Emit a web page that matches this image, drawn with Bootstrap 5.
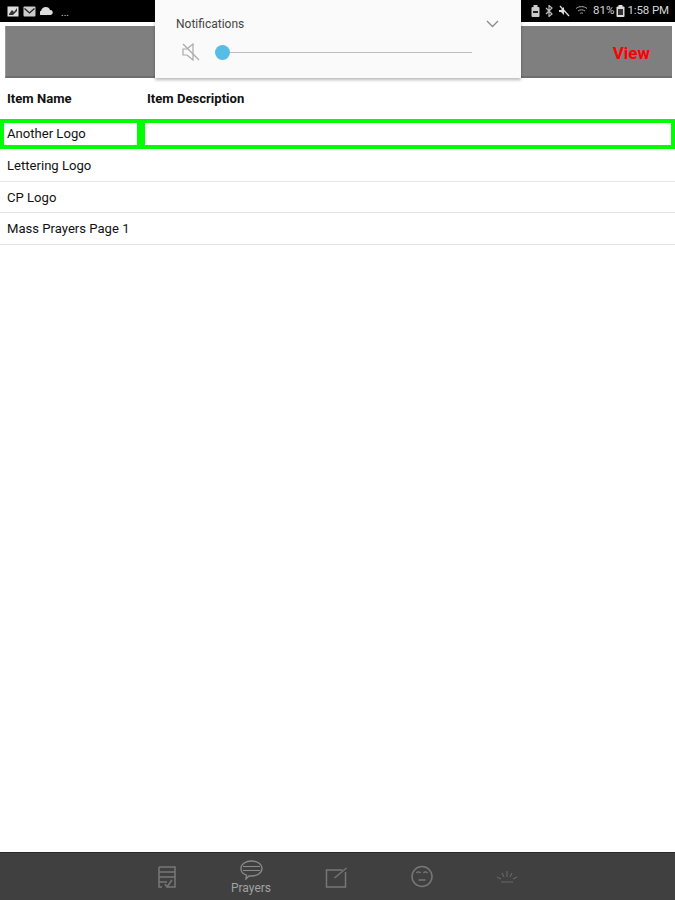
<!DOCTYPE html>
<html lang="en">
<head>
<meta charset="utf-8">
<title>Items</title>
<link href="https://cdn.jsdelivr.net/npm/bootstrap@5.3.0/dist/css/bootstrap.min.css" rel="stylesheet">
<style>
html,body{height:100%;}
body{font-family:"Roboto","Liberation Sans",sans-serif;background:#fff;color:#111;width:675px;height:900px;overflow:hidden;}
.phone-shell{height:900px;}
.status-strip{height:22px;background:#000;color:#d8d8d8;font-size:11.5px;padding:0 6px 0 7px;flex:none;}
.status-strip svg{display:block;}
.status-icons{gap:5px;}
.status-read{gap:2px;}
.status-time{letter-spacing:-.1px;}
.head-band{height:52px;margin:4px 3px 0 5px;background:#7f7f7f;border-bottom:2px solid #6e6e6e;border-left:1px solid #999;padding:5px 22px 0 0;flex:none;}
.view-word{color:#f00;font-weight:700;font-size:17px;}
.sound-panel{position:absolute;left:155px;top:0;width:366px;height:78px;background:#fafafa;box-shadow:0 2px 3px rgba(0,0,0,.28);z-index:5;padding:16px 22px 0 21px;}
.sound-title{font-size:12px;color:#444;line-height:16px;}
.sound-row{margin-top:8px;height:24px;}
.sound-mute{margin-left:5px;flex:none;}
.sound-track{height:1px;background:#bdbdbd;flex:1;margin-right:27px;}
.sound-knob{width:15px;height:15px;border-radius:50%;background:#55bde6;margin-left:14px;flex:none;}
.items-grid{margin-top:3px;font-size:13.1px;}
.items-row{display:flex;height:31.7px;border-bottom:1px solid #e4e4e4;align-items:center;padding-top:1px;}
.items-head{height:38px;border-bottom:0;font-weight:700;padding:0 0 2px;}
.name-col{width:141px;padding-left:7px;flex:none;white-space:nowrap;}
.desc-col{flex:1;padding-left:6px;}
.items-picked{height:30px;border-bottom:0;align-items:stretch;padding:0;margin-bottom:1px;}
.items-picked .name-col{padding-left:3px;border:4px solid #0f0;display:flex;align-items:center;}
.items-picked .desc-col{border:4px solid #0f0;}
.tab-strip{height:48px;margin-top:auto;background:#404040;border-top:1px solid #2a2a2a;flex:none;position:relative;}
.tab-slot{position:absolute;transform:translateX(-50%);color:#8e8e8e;text-align:center;}
.tab-slot svg{display:block;margin:0 auto;}
.tab-label{font-size:12px;line-height:12px;color:#a2a2a2;margin-top:2px;}
</style>
</head>
<body>
<div class="phone-shell d-flex flex-column position-relative">
  <div class="status-strip d-flex justify-content-between align-items-center">
    <div class="d-flex align-items-center gap-1">
      <svg width="12" height="11" viewBox="0 0 12 11"><rect x=".5" y=".5" width="11" height="10" fill="#ddd"/><path d="M2 8 5 4l2 2 3-4v3L6 9H2z" fill="#333"/></svg>
      <svg width="13" height="11" viewBox="0 0 13 11"><rect x=".5" y=".5" width="12" height="10" rx="1" fill="#ccc"/><path d="M1.500 2.500 6.500 7l5-4.500" fill="none" stroke="#222" stroke-width="1.300"/></svg>
      <svg width="13" height="8" viewBox="0 0 13 8"><path d="M1 8a2 2 0 0 1 0-4c.6-2.600 2.500-4 4.800-4 2.300 0 3.700 1.300 4.200 3a2.500 2.500 0 0 1 .5 5z" fill="#ddd"/></svg>
      <span class="ms-1" style="font-size:10px;line-height:18px;margin-top:3px">...</span>
    </div>
    <div class="d-flex align-items-center status-icons">
      <svg width="9" height="12" viewBox="0 0 9 12"><rect x=".5" y="2" width="8" height="10" rx="1" fill="#ccc"/><rect x="2.500" y="0" width="4" height="3" fill="#ccc"/><rect x="2" y="6" width="5" height="2" fill="#222"/></svg>
      <svg width="8" height="12" viewBox="0 0 8 12"><path d="M1 3l6 6-3 2.500V.5L7 3 1 9" fill="none" stroke="#bbb" stroke-width="1.200"/></svg>
      <svg width="12" height="12" viewBox="0 0 12 12"><path d="M1 5h2l3-3v8L3 7H1z" fill="#ddd"/><path d="M2 1l9 10" stroke="#ddd" stroke-width="1.300"/></svg>
      <svg width="13" height="10" viewBox="0 0 13 10"><path d="M1 2.500c3-2.500 8-2.500 11 0M3 5c2-1.600 5-1.600 7 0M5 7.500c1-.8 2-.8 3 0" fill="none" stroke="#aaa" stroke-width="1"/></svg>
      <div class="d-flex align-items-center status-read">
        <span>81%</span>
        <svg width="9" height="12" viewBox="0 0 9 12"><rect x=".5" y="1.500" width="8" height="10.500" rx="1" fill="#ddd"/><rect x="2.500" y="0" width="4" height="2" fill="#ddd"/><rect x="2" y="4" width="5" height="6" fill="#333"/></svg>
        <span class="status-time">1:58 PM</span>
      </div>
    </div>
  </div>

  <div class="head-band d-flex justify-content-end align-items-center">
    <span class="view-word">View</span>
  </div>

  <div class="sound-panel">
    <div class="d-flex justify-content-between align-items-center">
      <span class="sound-title">Notifications</span>
      <svg width="13" height="8" viewBox="0 0 13 8"><path d="M1 1l5.500 5.500L12 1" fill="none" stroke="#8a8a8a" stroke-width="1.300"/></svg>
    </div>
    <div class="sound-row d-flex align-items-center">
      <svg class="sound-mute" width="20" height="18" viewBox="0 0 20 18"><path d="M2 6h4l6-5v16l-6-5H2z" fill="none" stroke="#aaa" stroke-width="1.200"/><path d="M2 1l16 16" stroke="#aaa" stroke-width="1.200"/></svg>
      <span class="sound-knob"></span>
      <span class="sound-track"></span>
    </div>
  </div>

  <div class="items-grid">
    <div class="items-row items-head"><div class="name-col">Item Name</div><div class="desc-col">Item Description</div></div>
    <div class="items-row items-picked"><div class="name-col">Another Logo</div><div class="desc-col"></div></div>
    <div class="items-row"><div class="name-col">Lettering Logo</div><div class="desc-col"></div></div>
    <div class="items-row"><div class="name-col">CP Logo</div><div class="desc-col"></div></div>
    <div class="items-row"><div class="name-col">Mass Prayers Page 1</div><div class="desc-col"></div></div>
  </div>

  <div class="tab-strip">
    <div class="tab-slot" style="left:167px;top:13px"><svg width="20" height="23" viewBox="0 0 20 23"><path d="M2 1h16v20H10M2 1v20h3M2 6h16M2 11h16M2 16h8M8 18l2 3 5-7" fill="none" stroke="#777" stroke-width="1.500"/></svg></div>
    <div class="tab-slot" style="left:251px;top:7px"><svg width="23" height="20" viewBox="0 0 23 20"><path d="M11.500 1C17 1 22 4 22 8.500S17 16 11.500 16H9l-3 3 .5-4C3 14 1 11.500 1 8.500 1 4 6 1 11.500 1z" fill="none" stroke="#8a8a8a" stroke-width="1.300"/><path d="M3 6.500h17M3 10.500h17" stroke="#8a8a8a" stroke-width="1.200"/></svg><div class="tab-label">Prayers</div></div>
    <div class="tab-slot" style="left:336px;top:13px"><svg width="23" height="22" viewBox="0 0 23 22"><path d="M18 4H2v17h19V6" fill="none" stroke="#777" stroke-width="1.500"/><path d="M10 12 22 2" stroke="#777" stroke-width="1.300"/></svg></div>
    <div class="tab-slot" style="left:422px;top:12px"><svg width="23" height="23" viewBox="0 0 23 23"><circle cx="11.500" cy="11.500" r="10" fill="none" stroke="#777" stroke-width="1.500"/><path d="M6 8c1-1.500 3-1.500 4 0M13 8c1-1.500 3-1.500 4 0M8 15h7" fill="none" stroke="#777" stroke-width="1.400"/></svg></div>
    <div class="tab-slot" style="left:507px;top:17px"><svg width="22" height="14" viewBox="0 0 22 14"><path d="M11 1v6M6 3l2 4M16 3l-2 4M1 7l4 2M21 7l-4 2M5 12h12" fill="none" stroke="#666" stroke-width="1.200"/></svg></div>
  </div>
</div>
<script src="https://cdn.jsdelivr.net/npm/bootstrap@5.3.0/dist/js/bootstrap.bundle.min.js"></script>
</body>
</html>
